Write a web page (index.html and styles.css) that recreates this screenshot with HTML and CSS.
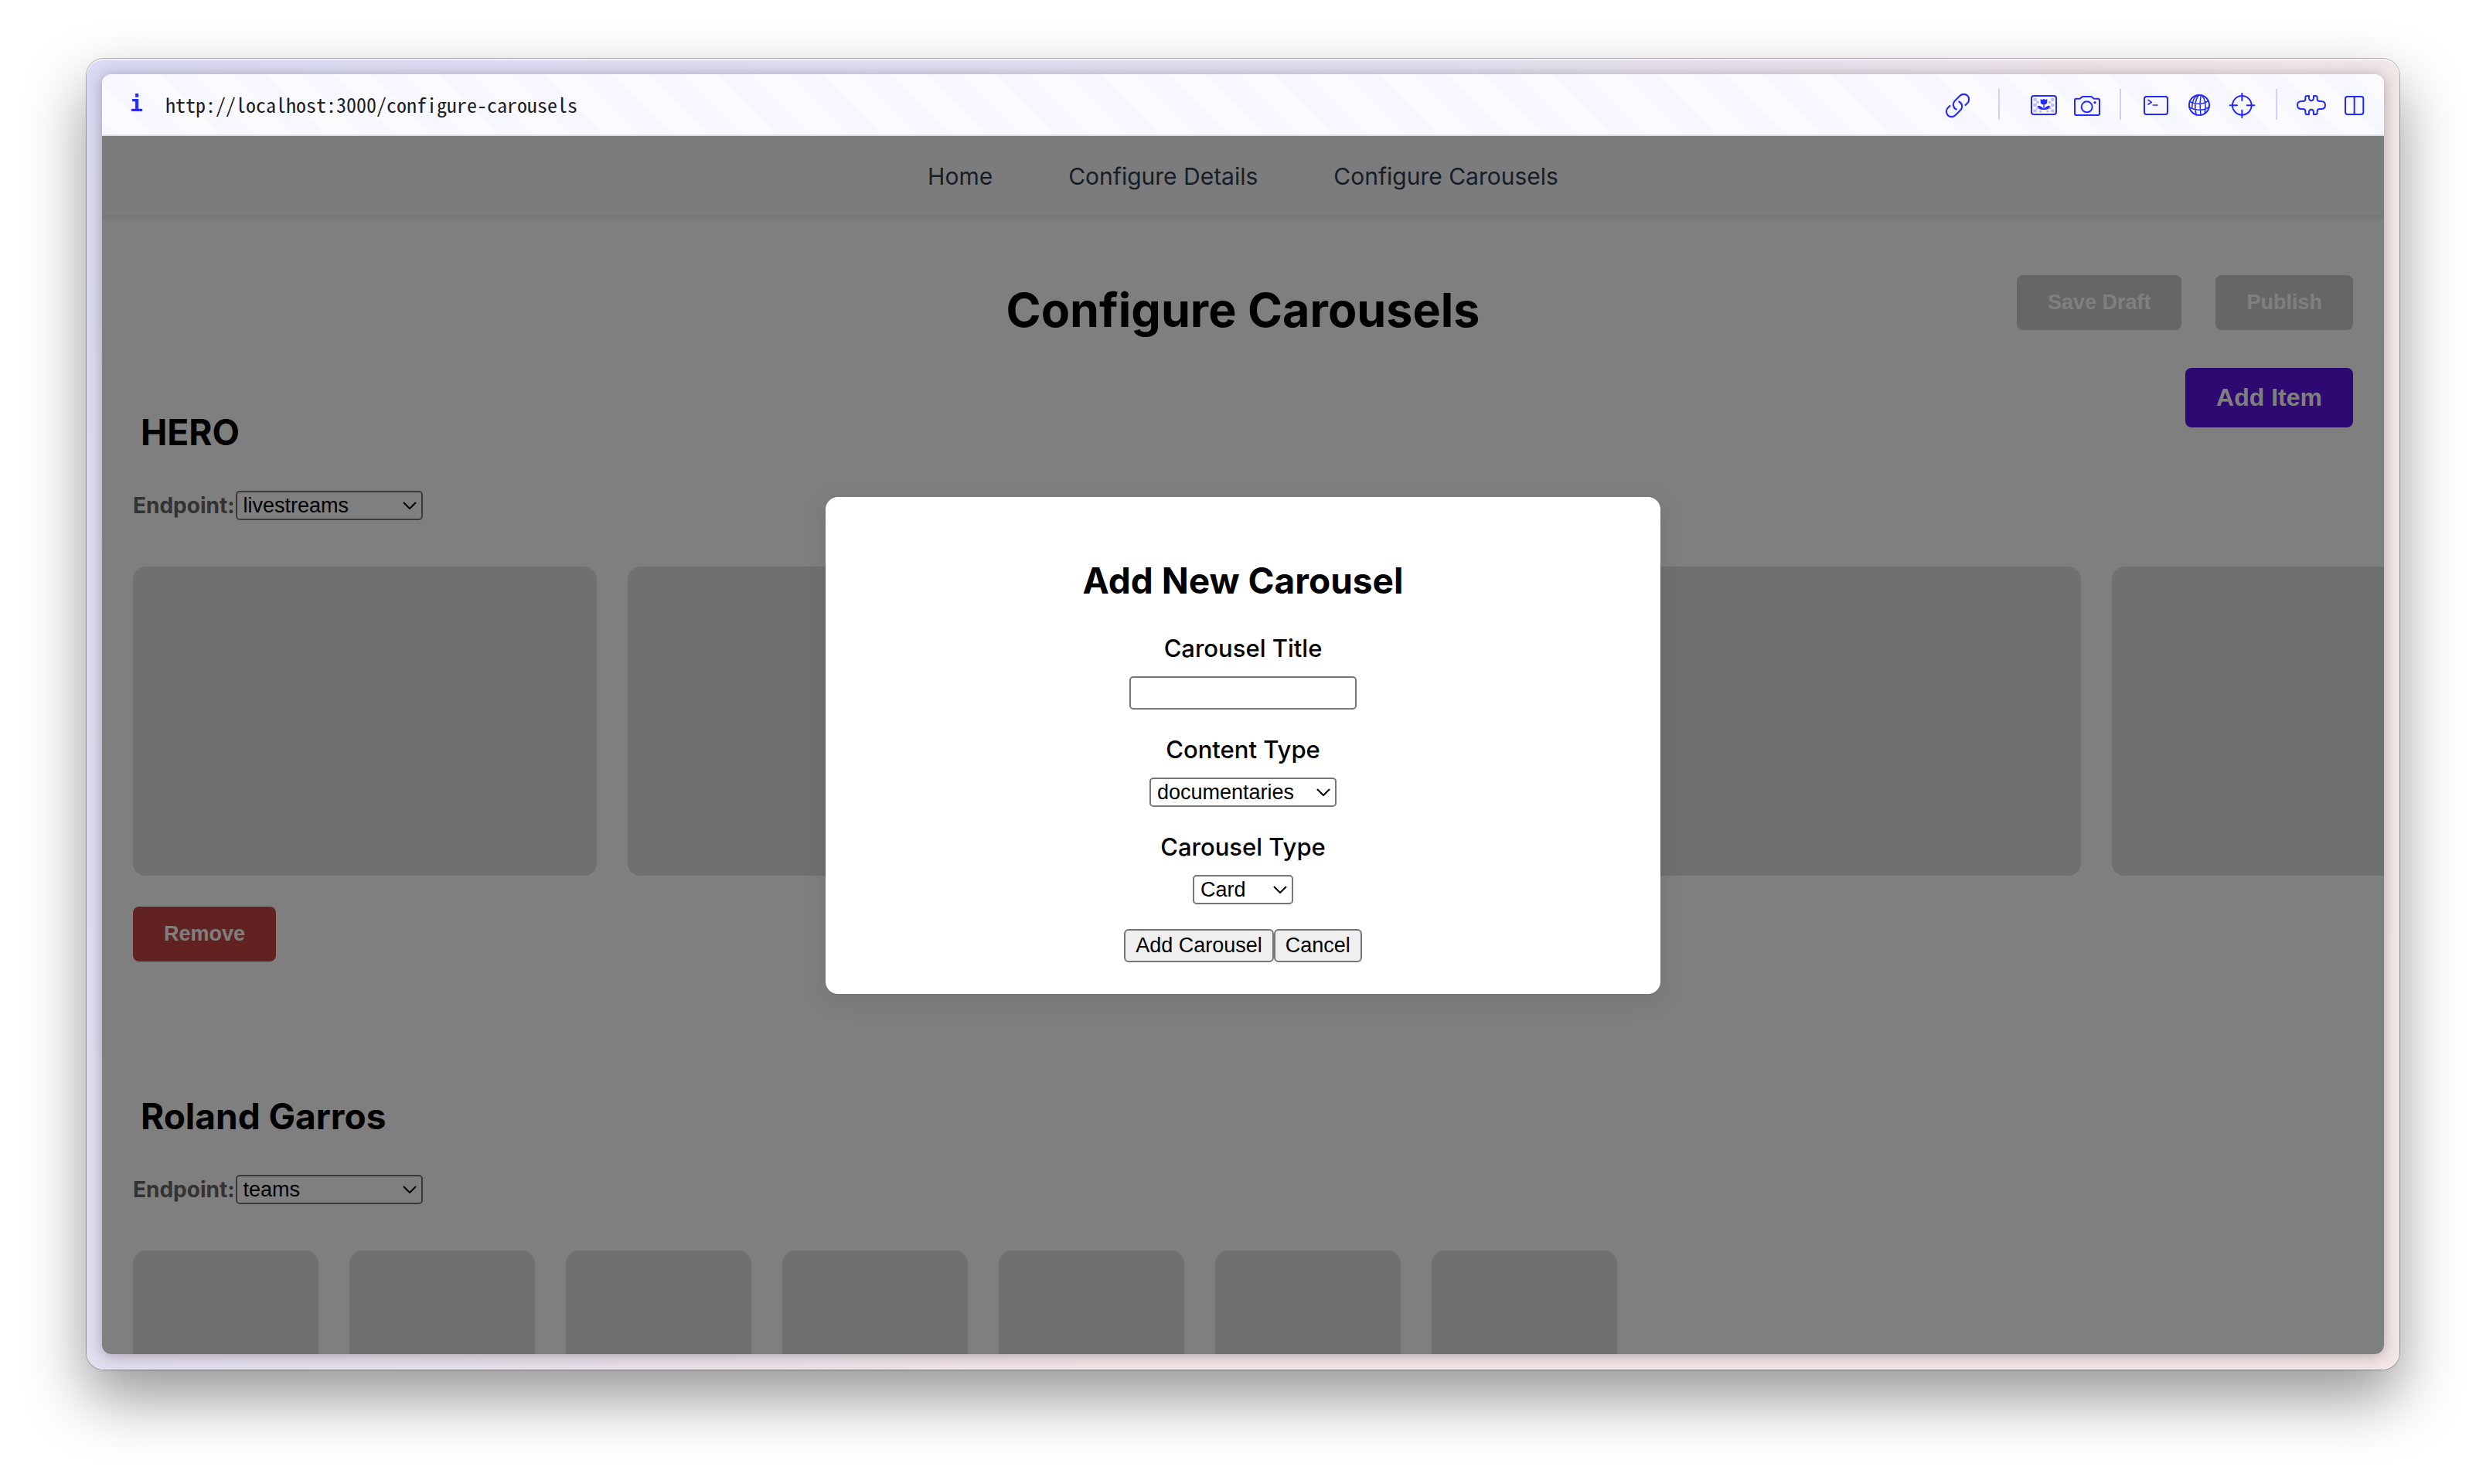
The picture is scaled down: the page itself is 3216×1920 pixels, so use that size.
FILE: index.html
```html
<!DOCTYPE html>
<html lang="en">
<head>
<meta charset="utf-8">
<title>Configure Carousels</title>
<link rel="stylesheet" href="styles.css">
</head>
<body>
<div class="window">
  <div class="browser">
    <div class="toolbar">
      <span class="info" aria-hidden="true">i</span>
      <span class="url">http://localhost:3000/configure-carousels</span>
      <div class="tools">
        <button class="tool" aria-label="Copy link">
          <svg viewBox="30 45 120 120"><g transform="translate(43.5 55.5) scale(4.5)"><path stroke-width="1.4" d="M13.19 8.688a4.5 4.5 0 0 1 1.242 7.244l-4.5 4.5a4.5 4.5 0 0 1-6.364-6.364l1.757-1.757m13.35-.622 1.757-1.757a4.5 4.5 0 0 0-6.364-6.364l-4.5 4.5a4.5 4.5 0 0 0 1.242 7.244"/></g></svg>
        </button>
        <span class="divider divider-wide"></span>
        <button class="tool" aria-label="Capture image">
          <svg viewBox="366 45 120 120">
            <g fill="#b9bbff" stroke="none"><path d="M392 80h12v12h-12zM403 92h10v10h-10zM392 102h12v12h-12zM403 114h10v10h-10zM392 124h12v12h-12zM460 80h12v12h-12zM450 92h10v10h-10zM460 102h12v12h-12zM450 114h10v10h-10zM460 124h12v12h-12zM414 128h10v8h-10zM442 128h10v8h-10z"/></g>
            <rect x="384" y="72" width="96" height="72" rx="9"/>
            <path fill="#2429ff" stroke="none" d="M419 84l7 4 6-5 6 5 7-4v11c0 6-4 10-11 11v16c3-7 10-12 22-12-1 9-7 15-18 16h-12c-11-1-17-7-18-16 12 0 19 5 22 12v-16c-7-1-11-5-11-11z"/>
          </svg>
        </button>
        <button class="tool" aria-label="Screenshot">
          <svg viewBox="534 45 120 120"><path d="M558 83h12c4 0 5-2 8-5 2-3 4-3 7-3h28c3 0 5 0 7 3 3 3 4 5 8 5h14q6 0 6 6v52q0 6-6 6h-84q-6 0-6-6V89q0-6 6-6z"/><circle cx="599" cy="115" r="21"/><circle cx="630" cy="98" r="5" fill="#2429ff" stroke="none"/></svg>
        </button>
        <span class="divider"></span>
        <button class="tool" aria-label="Console">
          <svg viewBox="24 45 120 120"><rect x="42" y="75" width="90" height="69" rx="8"/><path stroke-width="5" d="M57 88l13 9-13 8M76 108h17"/></svg>
        </button>
        <button class="tool" aria-label="Network">
          <svg viewBox="192 45 120 120"><circle cx="255" cy="108" r="39"/><path stroke-width="4.500" d="M254 69c-14 16-20 48-10 77M254 69c-18 4-28 26-27 52M262 70c-4 20-4 52-1 76M266 71c12 14 18 40 10 68M218 94c22 13 52 12 72-3M216 116c24 14 56 14 78-1"/></svg>
        </button>
        <button class="tool" aria-label="Inspect">
          <svg viewBox="360 45 120 120"><circle cx="421" cy="109" r="37"/><path d="M421 62v28M421 128v28M374 109h28M440 109h29"/></svg>
        </button>
        <span class="divider"></span>
        <button class="tool" aria-label="Extensions">
          <svg viewBox="630 45 120 120"><path d="M681 72H674Q667 72 667 79V84Q667 93 658 93H652C641 93 636 100 636 108S641 123 652 123H658Q667 123 667 132V137Q667 144 674 144H681V137C681 129 684 125 690 125S699 129 699 137V144H706Q713 144 713 137V132Q713 123 722 123H728C739 123 744 116 744 108S739 93 728 93H722Q713 93 713 84V79Q713 72 706 72H699V79C699 87 696 91 690 91S681 87 681 79Z"/></svg>
        </button>
        <button class="tool" aria-label="Split view">
          <svg viewBox="798 45 120 120"><rect x="822" y="75" width="70" height="69" rx="8"/><path d="M857 75v69"/></svg>
        </button>
      </div>
    </div>

    <div class="viewport">
      <nav class="nav">
        <a href="#home">Home</a>
        <a href="#details">Configure Details</a>
        <a href="#carousels">Configure Carousels</a>
      </nav>
      <main class="page">
        <header class="page-head">
          <h1>Configure Carousels</h1>
          <div class="actions">
            <button class="btn" disabled>Save Draft</button>
            <button class="btn" disabled>Publish</button>
          </div>
        </header>

        <section class="carousel">
          <div class="carousel-head">
            <h2>HERO</h2>
            <button class="btn btn-add">Add Item</button>
          </div>
          <div class="endpoint">
            <label for="endpoint-hero">Endpoint:</label>
            <span class="select">
              <select id="endpoint-hero"><option>livestreams</option><option>teams</option><option>documentaries</option></select>
              <svg viewBox="0 0 18 10"><path d="M1 1l8 8 8-8"/></svg>
            </span>
          </div>
          <div class="cards">
            <div class="card card-wide"></div><div class="card card-wide"></div><div class="card card-wide"></div><div class="card card-wide"></div><div class="card card-wide"></div>
          </div>
          <button class="btn btn-remove">Remove</button>
        </section>

        <section class="carousel">
          <div class="carousel-head">
            <h2>Roland Garros</h2>
          </div>
          <div class="endpoint">
            <label for="endpoint-rg">Endpoint:</label>
            <span class="select">
              <select id="endpoint-rg"><option>teams</option><option>livestreams</option><option>documentaries</option></select>
              <svg viewBox="0 0 18 10"><path d="M1 1l8 8 8-8"/></svg>
            </span>
          </div>
          <div class="cards">
            <div class="card"></div><div class="card"></div><div class="card"></div><div class="card"></div><div class="card"></div><div class="card"></div><div class="card"></div>
          </div>
        </section>
      </main>

      <div class="overlay">
        <form class="modal" role="dialog" aria-labelledby="modal-title">
          <h2 id="modal-title">Add New Carousel</h2>
          <div class="field">
            <label for="title">Carousel Title</label>
            <input id="title" type="text">
          </div>
          <div class="field">
            <label for="content-type">Content Type</label>
            <span class="select">
              <select id="content-type"><option>documentaries</option><option>livestreams</option><option>teams</option></select>
              <svg viewBox="0 0 18 10"><path d="M1 1l8 8 8-8"/></svg>
            </span>
          </div>
          <div class="field">
            <label for="carousel-type">Carousel Type</label>
            <span class="select select-short">
              <select id="carousel-type"><option>Card</option><option>Hero</option></select>
              <svg viewBox="0 0 18 10"><path d="M1 1l8 8 8-8"/></svg>
            </span>
          </div>
          <div class="modal-actions">
            <button type="button">Add Carousel</button><button type="button">Cancel</button>
          </div>
        </form>
      </div>
    </div>
  </div>
</div>
</body>
</html>
```
FILE: styles.css
```css
* { box-sizing: border-box; }

body {
  margin: 0;
  height: 100vh;
  padding: 76px 112px 148px;
  display: flex;
  background: #fff;
  color: #000;
  font-family: Inter, "Liberation Sans", sans-serif;
  overflow: hidden;
}

h1, h2 { margin: 0; font-weight: 700; }

button, input, select {
  font-family: "Liberation Sans", Arial, sans-serif;
  font-size: 27px;
  margin: 0;
}

/* Window frame */
.window {
  flex: 1;
  min-width: 0;
  display: flex;
  padding: 20px;
  border-radius: 22px;
  background: linear-gradient(135deg, #d9d9f2 0%, #e2deee 36%, #e8e1ea 50%, #f2e5e6 64%, #f3e6e6 100%);
  box-shadow: inset 0 2px 1px rgba(255, 255, 255, .6), 0 0 0 1px rgba(0, 0, 0, .28), 0 36px 80px rgba(0, 0, 0, .42);
}

.browser {
  flex: 1;
  min-width: 0;
  display: flex;
  flex-direction: column;
  border-radius: 12px;
  box-shadow: 0 2px 18px rgba(0, 0, 0, .28);
  overflow: hidden;
}

/* Toolbar */
.toolbar {
  display: flex;
  align-items: center;
  height: 80px;
  padding: 0 18px 0 36px;
  border-bottom: 2px solid #dddde2;
  background: linear-gradient(45deg, #f6f7ff 25%, #fbfaff 25% 50%, #f6f7ff 50% 75%, #fbfaff 75%) -13px 0 / 90px 90px;
}

.info {
  width: 46px;
  color: #2429ff;
  font: 700 28px/40px "DejaVu Sans Mono", monospace;
}

.url {
  color: #1d1d22;
  font: 26px/40px "Noto Sans Mono CJK SC", monospace;
}

.tools { display: flex; align-items: center; margin-left: auto; }

.tool {
  width: 40px;
  height: 40px;
  padding: 0;
  border: 0;
  background: none;
}
.tool + .tool { margin-left: 16px; }

.tool svg {
  display: block;
  width: 40px;
  height: 40px;
  fill: none;
  stroke: #2429ff;
  stroke-width: 6;
  stroke-linecap: round;
  stroke-linejoin: round;
}

.divider { width: 2px; height: 40px; margin: 0 24px; background: #d0d1fb; }
.divider-wide { margin: 0 35px; }

/* Page under the toolbar */
.viewport {
  position: relative;
  flex: 1;
  min-height: 0;
  overflow: hidden;
  background: #fff;
}

.nav {
  display: flex;
  justify-content: center;
  align-items: center;
  gap: 98px;
  height: 102px;
  padding-top: 2px;
  background: #f8f8f8;
  box-shadow: 0 4px 8px rgba(0, 0, 0, .1);
}
.nav a { color: #2c3e50; font-size: 30px; text-decoration: none; }

.page { padding: 78px 40px 0; }

.page-head {
  display: grid;
  grid-template-columns: 1fr auto 1fr;
  align-items: start;
  margin-bottom: 30px;
}
.page-head h1 { grid-column: 2; font-size: 61px; line-height: 90px; }

.actions { display: flex; justify-content: flex-end; gap: 44px; }

.btn {
  padding: 20px 40px;
  border: 0;
  border-radius: 8px;
  color: #fff;
  font-weight: 700;
  line-height: 31px;
}
.btn:disabled { background: #ccc; color: #fff; }
.btn-add { background: #5b14e4; font-size: 32px; line-height: 37px; }
.btn-remove { background: #c74545; }

.carousel { margin-bottom: 117px; }

.carousel-head { display: flex; justify-content: space-between; align-items: flex-start; }
.carousel-head h2 { padding: 55px 10px 0; font-size: 46px; line-height: 56px; }

.endpoint { display: flex; align-items: center; gap: 1px; margin: 48px 0 60px; }
.endpoint label { color: #666; font-size: 28px; font-weight: 700; line-height: 38px; }

.select { display: inline-grid; width: 242px; align-items: center; }
.select-short { width: 130px; }
.select select {
  grid-area: 1 / 1;
  width: 100%;
  height: 38px;
  padding: 0 8px;
  border: 2px solid #767676;
  border-radius: 5px;
  background: #fff;
  color: #000;
  appearance: none;
}
.select svg {
  grid-area: 1 / 1;
  justify-self: end;
  width: 18px;
  height: 10px;
  margin-right: 8px;
  fill: none;
  stroke: #000;
  stroke-width: 2;
  pointer-events: none;
}

.cards { display: flex; gap: 40px; margin: 0 -40px 40px 0; overflow: hidden; }
.card { flex: none; width: 240px; height: 400px; border-radius: 16px; background: #e0e0e0; }
.card-wide { width: 600px; }

/* Dialog */
.overlay {
  position: absolute;
  inset: 0;
  display: flex;
  align-items: center;
  justify-content: center;
  background: rgba(0, 0, 0, .5);
}

.modal {
  display: flex;
  flex-direction: column;
  align-items: center;
  gap: 32px;
  width: 1080px;
  max-width: 90%;
  padding: 80px 40px 41px;
  border-radius: 16px;
  background: #fff;
  box-shadow: 0 8px 32px rgba(0, 0, 0, .1);
}
.modal h2 { margin-bottom: 8px; font-size: 46px; line-height: 56px; }

.field { display: flex; flex-direction: column; align-items: center; gap: 16px; }
.field label { font-size: 31px; font-weight: 500; line-height: 40px; }
.field input {
  width: 294px;
  height: 43px;
  border: 2px solid #767676;
  border-radius: 5px;
}

.modal-actions { display: flex; }
.modal-actions button {
  height: 43px;
  padding: 0 13px;
  border: 2px solid #767676;
  border-radius: 6px;
  background: #efefef;
  color: #000;
}
```
